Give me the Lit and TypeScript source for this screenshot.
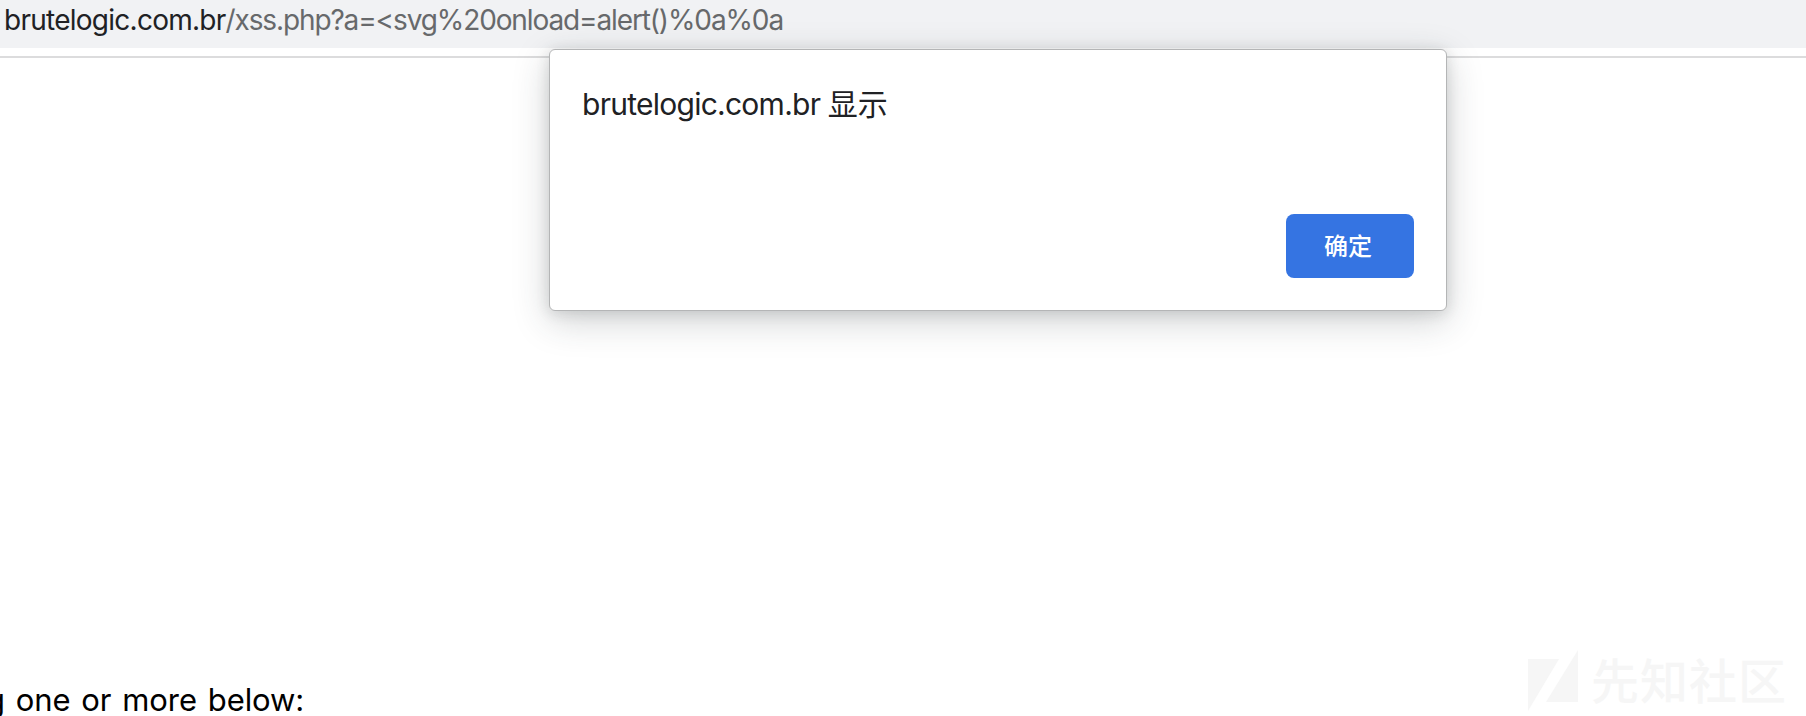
import { LitElement, html, css } from "lit";
import { customElement } from "lit/decorators.js";

@customElement("alert-dialog")
class AlertDialog extends LitElement {
  static styles = css`
    :host {
      box-sizing: border-box;
      display: flex;
      flex-direction: column;
      justify-content: space-between;
      width: 898px;
      height: 262px;
      padding: 34px 32px 32px 32px;
      background: #fff;
      border: 1px solid #b4b5b6;
      border-radius: 6px;
      box-shadow: 0 10px 36px rgba(40, 50, 55, 0.22), 0 2px 14px rgba(40, 50, 50, 0.14);
      font-family: Inter, "Noto Sans CJK SC", sans-serif;
    }
    .title {
      color: #202124;
      font-size: 30px;
      line-height: 40px;
      white-space: nowrap;
    }
    .host { letter-spacing: -0.74px; }
    .verb { font-size: 30px; margin-left: -1px; }
    .actions { display: flex; justify-content: flex-end; }
    .ok {
      width: 128px;
      height: 64px;
      padding: 0 4px 2px 0;
      border: 0;
      border-radius: 8px;
      background: #3574e2;
      color: #fff;
      font: 500 24px/62px "Noto Sans CJK SC", sans-serif;
    }
  `;
  render() {
    return html`
      <div class="title"><span class="host">brutelogic.com.br</span> <span class="verb">显示</span></div>
      <div class="actions"><button class="ok">确定</button></div>
    `;
  }
}

@customElement("app-root")
class AppRoot extends LitElement {
  static styles = css`
    :host {
      position: relative;
      display: flex;
      flex-direction: column;
      height: 716px;
      overflow: hidden;
      background: #fff;
      font-family: Inter, "Noto Sans CJK SC", sans-serif;
    }
    .address {
      height: 48px;
      padding-left: 4px;
      background: #f1f2f4;
      color: #67696b;
      font-size: 28px;
      line-height: 41px;
      letter-spacing: -1.12px;
      white-space: nowrap;
      box-sizing: border-box;
    }
    .domain { color: #202124; letter-spacing: -0.74px; }
    .rule { height: 8px; border-bottom: 2px solid #dcdcdd; }
    .page {
      flex: 1;
      display: flex;
      justify-content: space-between;
      align-items: flex-end;
    }
    .copy {
      margin: 0 0 -4px -14px;
      color: #000;
      font-size: 31px;
      line-height: 40px;
      letter-spacing: -0.08px;
      word-spacing: 2.2px;
      white-space: nowrap;
    }
    .mark {
      display: flex;
      align-items: flex-start;
      gap: 13px;
      margin: 0 19px 4px 0;
      color: #f6f6f6;
      font: 500 48px/57px "Noto Sans CJK SC", sans-serif;
      letter-spacing: 1px;
    }
    .logo { display: block; fill: currentColor; }
    alert-dialog { position: absolute; left: 549px; top: 49px; }
  `;
  render() {
    return html`
      <div class="address"><span class="domain">brutelogic.com.br</span><span>/xss.php?a=&lt;svg%20onload=alert()%0a%0a</span></div>
      <div class="rule"></div>
      <div class="page">
        <p class="copy">g one or more below:</p>
        <div class="mark">
          <svg class="logo" width="50" height="62" viewBox="0 0 50 62">
            <path d="M0 9H31L0 61ZM50 0V52H18Z" />
          </svg>
          <span>先知社区</span>
        </div>
      </div>
      <alert-dialog></alert-dialog>
    `;
  }
}
